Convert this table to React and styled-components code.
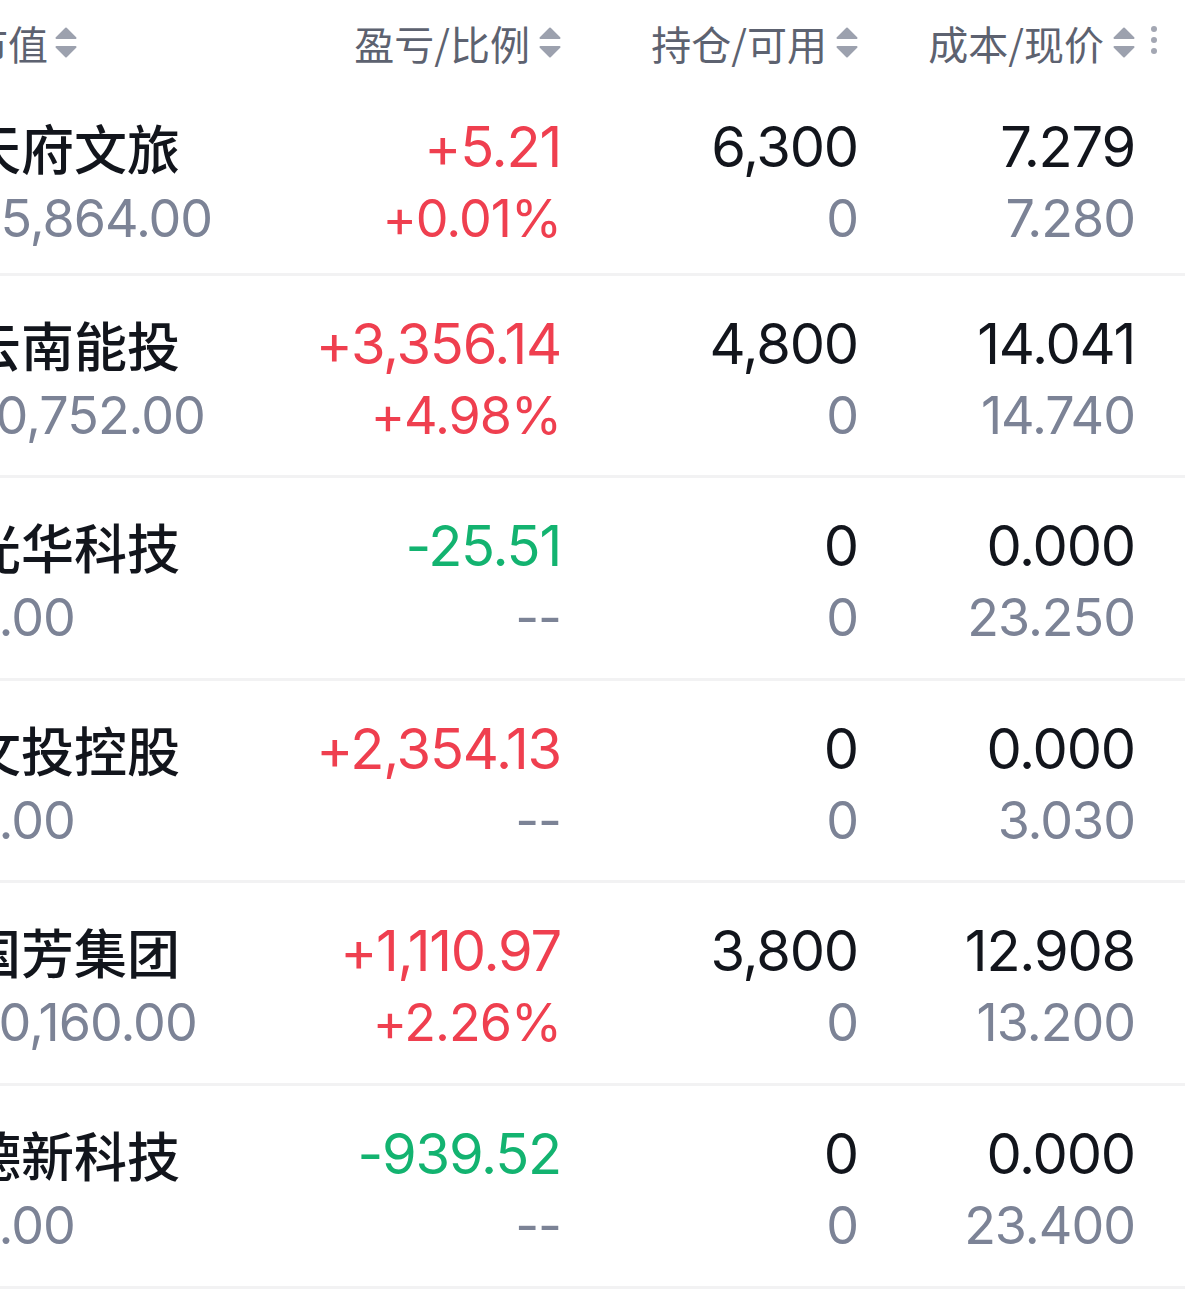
import styled, { createGlobalStyle } from "styled-components";

const GlobalStyle = createGlobalStyle`
  html, body {
    margin: 0;
    padding: 0;
    background: #ffffff;
    overflow: hidden;
  }
  body {
    font-family: Inter, "Noto Sans CJK SC", sans-serif;
    -webkit-font-smoothing: antialiased;
  }
`;

const COLS = "274px 319px 297px 277px 50px";

const Table = styled.div`
  width: 1217px;
  margin-left: -32px;
`;

const HeaderRow = styled.div`
  display: grid;
  grid-template-columns: ${COLS};
  height: 73px;
  padding-top: 12px;
  box-sizing: border-box;
  align-items: center;
`;

const HeadCell = styled.div`
  display: flex;
  align-items: center;
  justify-content: ${(p) => (p.$left ? "flex-start" : "flex-end")};
  gap: ${(p) => (p.$left ? "7px" : "9px")};
  font-family: "Noto Sans CJK SC", sans-serif;
  font-size: 40px;
  color: #5d6270;
  white-space: nowrap;
`;

const MoreCell = styled.div`
  display: flex;
  justify-content: flex-start;
  padding-left: 15px;
  margin-top: -6px;
`;

const Row = styled.div`
  display: grid;
  grid-template-columns: ${COLS};
  height: 202.6px;
  box-sizing: border-box;
  padding-top: ${(p) => (p.$first ? "38px" : "32px")};
  border-bottom: 3px solid #f2f2f3;
`;

const Cell = styled.div`
  display: flex;
  flex-direction: column;
  align-items: ${(p) => (p.$left ? "flex-start" : "flex-end")};
  white-space: nowrap;
`;

const Main = styled.div`
  line-height: 72px;
  color: ${(p) => p.$color || "#12151c"};
  font-weight: ${(p) => (p.$name ? 500 : 400)};
  font-family: ${(p) =>
    p.$name ? '"Noto Sans CJK SC", sans-serif' : 'Inter, "Noto Sans CJK SC", sans-serif'};
  font-size: ${(p) => (p.$name ? "53px" : "56px")};
  letter-spacing: ${(p) => (p.$name ? "0" : "-1.2px")};
`;

const Sub = styled.div`
  font-size: 52px;
  line-height: 72px;
  letter-spacing: -1px;
  color: ${(p) => p.$color || "#7c8396"};
`;

const RED = "#ef3f4f";
const GREEN = "#13b370";

function SortIcon() {
  return (
    <svg width="22" height="32" viewBox="0 0 22 32">
      <path
        d="M11 1.5 L20.5 11 L1.5 11 Z"
        fill="#9ca1ae"
        stroke="#9ca1ae"
        strokeWidth="2"
        strokeLinejoin="round"
      />
      <path
        d="M1.5 20 L20.5 20 L11 29.5 Z"
        fill="#9ca1ae"
        stroke="#9ca1ae"
        strokeWidth="2"
        strokeLinejoin="round"
      />
    </svg>
  );
}

function MoreIcon() {
  return (
    <svg width="8" height="30" viewBox="0 0 8 30">
      <circle cx="4" cy="4" r="3" fill="#a3a7b3" />
      <circle cx="4" cy="15" r="3" fill="#a3a7b3" />
      <circle cx="4" cy="26" r="3" fill="#a3a7b3" />
    </svg>
  );
}

const rows = [
  { name: "天府文旅", value: "45,864.00", pnl: "+5.21", ratio: "+0.01%", hold: "6,300", avail: "0", cost: "7.279", price: "7.280" },
  { name: "云南能投", value: "70,752.00", pnl: "+3,356.14", ratio: "+4.98%", hold: "4,800", avail: "0", cost: "14.041", price: "14.740" },
  { name: "光华科技", value: "0.00", pnl: "-25.51", ratio: "--", hold: "0", avail: "0", cost: "0.000", price: "23.250" },
  { name: "文投控股", value: "0.00", pnl: "+2,354.13", ratio: "--", hold: "0", avail: "0", cost: "0.000", price: "3.030" },
  { name: "国芳集团", value: "50,160.00", pnl: "+1,110.97", ratio: "+2.26%", hold: "3,800", avail: "0", cost: "12.908", price: "13.200" },
  { name: "德新科技", value: "0.00", pnl: "-939.52", ratio: "--", hold: "0", avail: "0", cost: "0.000", price: "23.400" },
];

function tone(s) {
  if (s.startsWith("+")) return RED;
  if (s.startsWith("-") && s !== "--") return GREEN;
  return undefined;
}

export default function App() {
  return (
    <>
      <GlobalStyle />
      <Table>
        <HeaderRow>
          <HeadCell $left>
            市值
            <SortIcon />
          </HeadCell>
          <HeadCell>
            盈亏/比例
            <SortIcon />
          </HeadCell>
          <HeadCell>
            持仓/可用
            <SortIcon />
          </HeadCell>
          <HeadCell>
            成本/现价
            <SortIcon />
          </HeadCell>
          <MoreCell>
            <MoreIcon />
          </MoreCell>
        </HeaderRow>
        {rows.map((r, i) => (
          <Row key={r.name} $first={i === 0}>
            <Cell $left>
              <Main $name>{r.name}</Main>
              <Sub>{r.value}</Sub>
            </Cell>
            <Cell>
              <Main $color={tone(r.pnl)}>{r.pnl}</Main>
              <Sub $color={tone(r.ratio)}>{r.ratio}</Sub>
            </Cell>
            <Cell>
              <Main>{r.hold}</Main>
              <Sub>{r.avail}</Sub>
            </Cell>
            <Cell>
              <Main>{r.cost}</Main>
              <Sub>{r.price}</Sub>
            </Cell>
            <div />
          </Row>
        ))}
      </Table>
    </>
  );
}
